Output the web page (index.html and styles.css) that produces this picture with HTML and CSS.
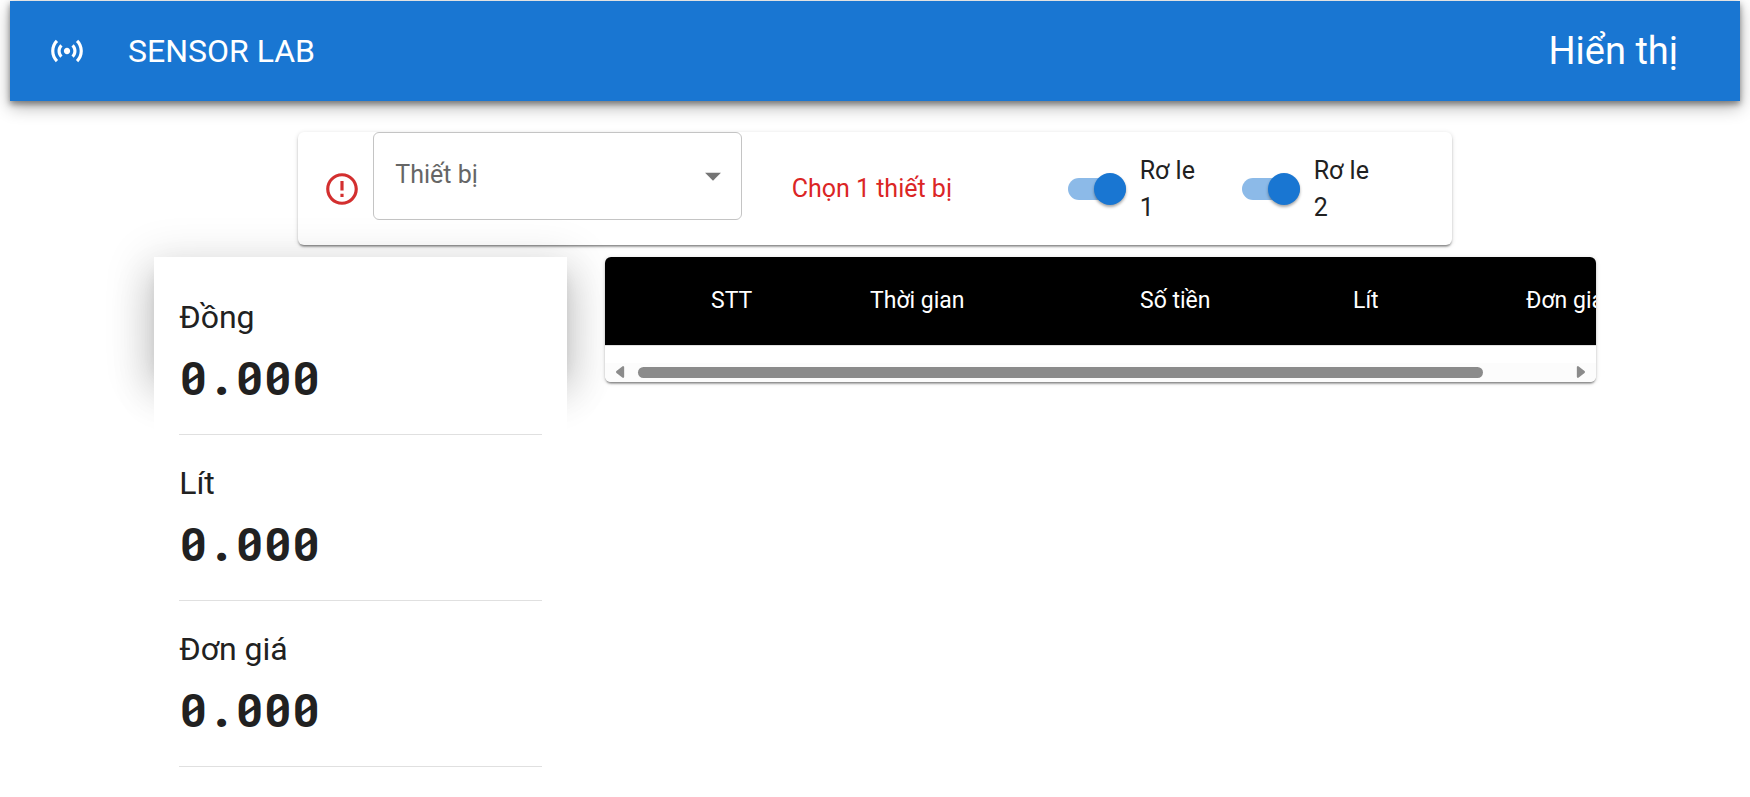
FILE: index.html
```html
<!DOCTYPE html>
<html lang="vi">
<head>
<meta charset="utf-8">
<meta name="viewport" content="width=device-width, initial-scale=1">
<title>Sensor Lab</title>
<link rel="stylesheet" href="styles.css">
</head>
<body>
<header class="app-bar">
  <svg class="icon" viewBox="0 0 24 24" aria-hidden="true"><path d="M7.76 16.24C6.67 15.16 6 13.66 6 12s.67-3.16 1.76-4.24l1.42 1.42C8.45 9.9 8 10.9 8 12c0 1.1.45 2.1 1.17 2.83l-1.41 1.41zm8.48 0C17.33 15.16 18 13.66 18 12s-.67-3.16-1.76-4.24l-1.42 1.42C15.55 9.9 16 10.9 16 12c0 1.1-.45 2.1-1.17 2.83l1.41 1.41zM12 10c-1.1 0-2 .9-2 2s.9 2 2 2 2-.9 2-2-.9-2-2-2zm8 2c0 2.21-.9 4.21-2.35 5.65l1.42 1.42C20.88 17.26 22 14.76 22 12s-1.12-5.26-2.93-7.07l-1.42 1.42C19.1 7.79 20 9.79 20 12zM6.35 6.35 4.93 4.93C3.12 6.74 2 9.24 2 12s1.12 5.26 2.93 7.07l1.42-1.42C4.9 16.21 4 14.21 4 12s.9-4.21 2.35-5.65z"/></svg>
  <h1 class="app-title">SENSOR LAB</h1>
  <a class="app-link" href="#metrics">Hiển thị</a>
</header>

<section class="controls">
  <svg class="icon icon-error" viewBox="0 0 24 24" aria-hidden="true"><path d="M11 15h2v2h-2zm0-8h2v6h-2zm.99-5C6.47 2 2 6.48 2 12s4.47 10 9.99 10C17.52 22 22 17.52 22 12S17.52 2 11.99 2zM12 20c-4.42 0-8-3.58-8-8s3.58-8 8-8 8 3.58 8 8-3.58 8-8 8z"/></svg>
  <div class="select-box">
    <select class="select" aria-label="Thiết bị"><option>Thiết bị</option></select>
    <svg class="icon select-arrow" viewBox="0 0 24 24" aria-hidden="true"><path d="M7 10l5 5 5-5z"/></svg>
  </div>
  <p class="message">Chọn 1 thiết bị</p>
  <label class="relay"><input class="switch" type="checkbox" role="switch" checked><span class="relay-name">Rơ le 1</span></label>
  <label class="relay"><input class="switch" type="checkbox" role="switch" checked><span class="relay-name">Rơ le 2</span></label>
</section>

<main class="content">
  <section class="metrics" id="metrics">
    <div class="metric"><h2 class="metric-name">Đồng</h2><p class="metric-value">0.000</p></div>
    <div class="metric"><h2 class="metric-name">Lít</h2><p class="metric-value">0.000</p></div>
    <div class="metric"><h2 class="metric-name">Đơn giá</h2><p class="metric-value">0.000</p></div>
  </section>

  <section class="history">
    <div class="table-scroll">
      <table class="table">
        <colgroup><col class="col-mark"><col class="col-index"><col class="col-time"><col class="col-amount"><col class="col-litre"><col class="col-price"></colgroup>
        <thead><tr><th></th><th>STT</th><th>Thời gian</th><th>Số tiền</th><th>Lít</th><th>Đơn giá</th></tr></thead>
      </table>
    </div>
    <div class="scrollbar">
      <button class="scroll-button" type="button" aria-label="Cuộn trái"><svg class="scroll-arrow" viewBox="0 0 10 12"><path d="M8 2v8L3 6z"/></svg></button>
      <div class="scroll-track"><div class="scroll-thumb"></div></div>
      <button class="scroll-button" type="button" aria-label="Cuộn phải"><svg class="scroll-arrow" viewBox="0 0 10 12"><path d="M2 2v8l5-4z"/></svg></button>
    </div>
  </section>
</main>
</body>
</html>
```
FILE: styles.css
```css
* { box-sizing: border-box; }

body {
  margin: 0;
  padding: 1px 10px 0;
  background: #fff;
  color: #212121;
  font-family: Roboto, "Liberation Sans", sans-serif;
  font-size: 25px;
  line-height: 37px;
}

h1, h2, p { margin: 0; font-weight: 400; }

.icon { display: block; width: 38px; height: 38px; fill: currentColor; }

.app-bar {
  display: flex;
  align-items: center;
  gap: 42px;
  padding: 20px 62px 20px 38px;
  background: #1976d2;
  color: #fff;
  box-shadow: 0 3px 6px rgba(0, 0, 0, .4), 0 6px 16px rgba(0, 0, 0, .3);
}
.app-title { font-size: 32px; line-height: 60px; }
.app-link { margin-left: auto; color: inherit; font-size: 38px; line-height: 60px; text-decoration: none; }

.controls {
  display: grid;
  grid-template-columns: 38px 35% 1fr 174px 174px;
  align-items: center;
  width: 66.67%;
  min-height: 113px;
  margin: 31px auto 0;
  padding: 0 36px 0 25px;
  border-radius: 6px;
  background: #fff;
  box-shadow: 0 3px 2px -2px rgba(0, 0, 0, .3), 0 2px 2px rgba(0, 0, 0, .2), 0 1px 5px rgba(0, 0, 0, .14);
}
.icon-error { color: #d32f2f; }
.select-box { display: grid; align-self: start; align-items: center; margin: 0 2px 0 12px; }
.select {
  grid-area: 1 / 1;
  width: 100%;
  height: 88px;
  padding: 0 50px 4px 21px;
  border: 1px solid #c4c4c4;
  border-radius: 6px;
  background: #fff;
  color: #666;
  font: inherit;
  appearance: none;
}
.select-arrow { grid-area: 1 / 1; justify-self: end; margin-right: 10px; color: #757575; pointer-events: none; }
.message { padding-left: 48px; color: #db2525; }

.relay { display: flex; align-items: center; gap: 14px; }
.relay-name { width: 66px; }
.switch {
  display: flex;
  align-items: center;
  justify-content: flex-end;
  flex: none;
  width: 58px;
  height: 22px;
  margin: 0;
  border-radius: 11px;
  background: #8cbae8;
  appearance: none;
}
.switch::before {
  content: "";
  flex: none;
  width: 32px;
  height: 32px;
  border-radius: 50%;
  background: #1976d2;
  box-shadow: 0 2px 3px rgba(0, 0, 0, .35);
}

.content {
  display: grid;
  grid-template-columns: 5fr 12fr;
  align-items: start;
  gap: 38px;
  width: 83.33%;
  margin: 12px auto 0;
  isolation: isolate;
}

.metrics { position: relative; min-width: 0; padding: 12px 25px 0; background: #fff; }
.metrics::before {
  content: "";
  position: absolute;
  z-index: -1;
  inset: 0 0 auto;
  height: 112px;
  box-shadow: 0 11px 15px -7px rgba(0, 0, 0, .2), 0 24px 38px 3px rgba(0, 0, 0, .14), 0 9px 46px 8px rgba(0, 0, 0, .12);
}
.metric { padding: 25px 0 20px; border-bottom: 1px solid #e0e0e0; }
.metric-name { font-size: 32px; line-height: 46px; }
.metric-value { font: 700 47px/74px "Roboto Mono", "DejaVu Sans Mono", monospace; }

.history {
  min-width: 0;
  overflow: hidden;
  border-radius: 6px;
  background: #fff;
  box-shadow: 0 3px 2px -2px rgba(0, 0, 0, .3), 0 2px 2px rgba(0, 0, 0, .2), 0 1px 5px rgba(0, 0, 0, .14);
}
.table-scroll { overflow: hidden; padding-bottom: 17px; }
.table { width: 1085px; table-layout: fixed; border-collapse: collapse; border-bottom: 1px solid #e0e0e0; }
.table th {
  height: 88px;
  padding: 0 25px;
  background: #000;
  color: #fff;
  font-size: 23px;
  font-weight: 400;
  text-align: left;
  white-space: nowrap;
}
.col-mark { width: 81px; }
.col-index { width: 159px; }
.col-time { width: 270px; }
.col-amount { width: 213px; }
.col-litre { width: 173px; }
.col-price { width: 189px; }

.scrollbar { display: flex; align-items: center; height: 19px; padding: 0 8px; background: #fcfcfc; }
.scroll-button { display: flex; padding: 0; border: 0; background: none; }
.scroll-arrow { display: block; width: 13px; height: 14px; fill: #8b8b8b; stroke: #8b8b8b; stroke-width: 2; stroke-linejoin: round; }
.scroll-track { flex: 1; margin: 0 12px; }
.scroll-thumb { width: 91.4%; height: 11px; border-radius: 6px; background: #8b8b8b; }
```
